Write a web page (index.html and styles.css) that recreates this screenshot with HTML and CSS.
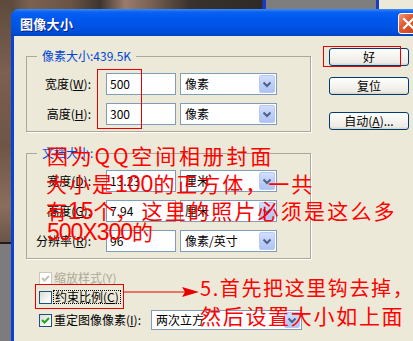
FILE: index.html
```html
<!DOCTYPE html>
<html lang="zh-CN">
<head>
<meta charset="utf-8">
<title>图像大小</title>
<link rel="stylesheet" href="styles.css">
</head>
<body>
<div class="desk">
  <div class="window">
    <div class="titlebar">
      <span class="title">图像大小</span>
      <span class="close"><svg width="13" height="13" viewBox="0 0 13 13"><path d="M2 2 L11 11 M11 2 L2 11" stroke="#fff" stroke-width="2.2" stroke-linecap="square"/></svg></span>
    </div>
    <div class="client">
      <div class="main">
        <fieldset class="group g1">
          <legend>像素大小:439.5K</legend>
          <div class="row">
            <span class="lbl">宽度(<u>W</u>):</span>
            <span class="field">500</span>
            <span class="select"><span class="val">像素</span><span class="drop"><svg width="10" height="7" viewBox="0 0 10 7"><path d="M1.5 1.5 L5 5 L8.5 1.5" fill="none" stroke="#4D6185" stroke-width="2"/></svg></span></span>
          </div>
          <div class="row">
            <span class="lbl">高度(<u>H</u>):</span>
            <span class="field">300</span>
            <span class="select"><span class="val">像素</span><span class="drop"><svg width="10" height="7" viewBox="0 0 10 7"><path d="M1.5 1.5 L5 5 L8.5 1.5" fill="none" stroke="#4D6185" stroke-width="2"/></svg></span></span>
          </div>
        </fieldset>
        <fieldset class="group g2">
          <legend>文档大小:</legend>
          <div class="row">
            <span class="lbl">宽度(<u>D</u>):</span>
            <span class="field">13.23</span>
            <span class="select"><span class="val">厘米</span><span class="drop"><svg width="10" height="7" viewBox="0 0 10 7"><path d="M1.5 1.5 L5 5 L8.5 1.5" fill="none" stroke="#4D6185" stroke-width="2"/></svg></span></span>
          </div>
          <div class="row">
            <span class="lbl">高度(<u>G</u>):</span>
            <span class="field">7.94</span>
            <span class="select"><span class="val">厘米</span><span class="drop"><svg width="10" height="7" viewBox="0 0 10 7"><path d="M1.5 1.5 L5 5 L8.5 1.5" fill="none" stroke="#4D6185" stroke-width="2"/></svg></span></span>
          </div>
          <div class="row">
            <span class="lbl">分辨率(<u>R</u>):</span>
            <span class="field">96</span>
            <span class="select"><span class="val">像素/英寸</span><span class="drop"><svg width="10" height="7" viewBox="0 0 10 7"><path d="M1.5 1.5 L5 5 L8.5 1.5" fill="none" stroke="#4D6185" stroke-width="2"/></svg></span></span>
          </div>
        </fieldset>
        <div class="checks">
          <div class="chk disabled">
            <span class="cb"><svg width="11" height="11" viewBox="0 0 11 11"><path d="M2 5 L4.5 7.5 L9 3" fill="none" stroke="#C4C2B4" stroke-width="2"/></svg></span>
            <span class="ctext">缩放样式(Y)</span>
          </div>
          <div class="chk">
            <span class="cb"></span>
            <span class="ctext focus">约束比例(<u>C</u>)</span>
          </div>
          <div class="chk resample">
            <span class="cb"><svg width="11" height="11" viewBox="0 0 11 11"><path d="M2 5 L4.5 7.5 L9 3" fill="none" stroke="#21A121" stroke-width="2"/></svg></span>
            <span class="ctext wide">重定图像像素(<u>I</u>):</span>
            <span class="select long"><span class="val">两次立方</span><span class="drop"><svg width="10" height="7" viewBox="0 0 10 7"><path d="M1.5 1.5 L5 5 L8.5 1.5" fill="none" stroke="#4D6185" stroke-width="2"/></svg></span></span>
          </div>
        </div>
      </div>
      <div class="buttons">
        <span class="btn ok">好</span>
        <span class="btn reset">复位</span>
        <span class="btn auto">自动(<u>A</u>)...</span>
      </div>
    </div>
  </div>

  <div class="mark mark-ok"></div>
  <div class="mark mark-size"></div>
  <div class="mark mark-constrain"></div>
  <svg class="arrow" width="76" height="14" viewBox="0 0 76 14"><path d="M0 7 H62" stroke="#E80000" stroke-width="1.2"/><path d="M58 2 L75 7 L58 12 L61 7 Z" fill="#E80000"/></svg>

  <div class="note n1">因为QQ空间相册封面</div>
  <div class="note n2">大小是<span class="num">100</span>的正方体，一共</div>
  <div class="note n3">有<span class="num">15</span>个，<span class="gap">这里的照片必须是这么多</span></div>
  <div class="note n4"><span class="num big">500X300</span>的</div>
  <div class="note n5">5.首先把这里钩去掉，</div>
  <div class="note n6">然后设置大小如上面</div>
</div>
</body>
</html>
```
FILE: styles.css
```css
* { box-sizing: border-box; }
html, body { margin: 0; padding: 0; }
body {
  width: 413px;
  height: 341px;
  overflow: hidden;
  font-family: "Noto Sans CJK SC", "DejaVu Sans", sans-serif;
  font-size: 12px;
  color: #000;
}
u { text-decoration: underline; text-underline-offset: 1px; }

.desk {
  position: relative;
  width: 413px;
  height: 341px;
  overflow: hidden;
  padding: 9px 0 0 11px;
  background:
    linear-gradient(#7c7c7c, #7c7c7c) 0 244px / 11px 100px no-repeat,
    linear-gradient(#1e1e1e, #1e1e1e) 0 242px / 11px 2px no-repeat,
    linear-gradient(to bottom, #5d4a3c, #7c6050 30%, #6e5545 60%, #8a6e5c 85%, #6a5546) 0 0 / 11px 242px no-repeat,
    linear-gradient(to right, #4b3d30 0, #7c6150 30px, #6b5444 70px, #3e3530 100px, #9a7c6c 125px, #7a6255 150px, #3a322c 190px, #2e2a26 262px, #1c3bc4 263px, #1c3bc4 266px, #7e7e7e 266px, #7e7e7e 376px, #1c3bc4 376px, #1c3bc4 379px, #ECE9D8 379px) 0 0 / 100% 12px no-repeat,
    #6a5546;
}

.window {
  width: 410px;
  height: 340px;
  background: #0842D8;
  border-top-left-radius: 8px;
  display: flex;
  flex-direction: column;
}
.titlebar {
  height: 27px;
  flex: none;
  display: flex;
  align-items: flex-start;
  border-top-left-radius: 8px;
  background: linear-gradient(to bottom, #3A8CFB 0, #0A62F2 3px, #0058EE 9px, #0053E4 18px, #0049D4 25px, #003FB8 27px);
}
.title {
  margin: 2px 0 0 9px;
  line-height: 25px;
  color: #fff;
  font-weight: bold;
  font-size: 13px;
  letter-spacing: 0.3px;
  text-shadow: 1px 1px 0 #0A1C8A;
}
.close {
  margin: 4px 2px 0 auto;
  width: 21px;
  height: 21px;
  border: 1px solid #fff;
  border-radius: 3px;
  background: linear-gradient(135deg, #F0967A 0, #E2582F 40%, #C8401A 100%);
  display: flex;
  align-items: center;
  justify-content: center;
}

.client {
  flex: 1;
  margin-left: 3px;
  background: #ECE9D8;
  display: flex;
  align-items: flex-start;
  gap: 18px;
  padding: 12px 0 0 12px;
}
.main { width: 285px; flex: none; padding-top: 2px; }

.group {
  margin: 0;
  padding: 0 0 6px 0;
  width: 285px;
  min-width: 0;
  border: 1px solid #ACA899;
  box-shadow: 1px 1px 0 #fff;
}
.group legend {
  margin-left: 10px;
  padding: 0 5px;
  height: 12px;
  line-height: 12px;
  font-size: 12px;
  color: #0046D5;
}
.g2 { margin-top: 15px; }

.row {
  display: flex;
  align-items: center;
  height: 22px;
  margin-top: 8px;
}
.group legend + .row { margin-top: 11px; }
.lbl {
  width: 64px;
  margin-right: 15px;
  text-align: right;
  white-space: nowrap;
  line-height: 14px;
}
.field {
  width: 70px;
  height: 22px;
  border: 1px solid #7F9DB9;
  background: #fff;
  padding-left: 3px;
  line-height: 20px;
}
.select {
  width: 97px;
  height: 22px;
  margin-left: 4px;
  border: 1px solid #7F9DB9;
  background: #fff;
  display: flex;
  align-items: center;
  padding: 1px;
}
.select .val { flex: 1; padding-left: 3px; line-height: 18px; white-space: nowrap; }
.drop {
  width: 16px;
  height: 18px;
  flex: none;
  border: 1px solid #B6C9F7;
  border-radius: 2px;
  background: linear-gradient(to bottom, #D2DEFD, #BACCF8 60%, #AFC3F4);
  display: flex;
  align-items: center;
  justify-content: center;
}

.checks { padding: 10px 0 0 13px; }
.chk { display: flex; align-items: center; height: 18px; }
.chk + .chk { margin-top: 1px; }
.chk.resample { height: 20px; margin-top: 4px; }
.cb {
  width: 13px;
  height: 13px;
  flex: none;
  margin-right: 2px;
  border: 1px solid #1C5180;
  background: linear-gradient(135deg, #DCDCD7, #F4F4F0 60%, #fff);
  display: flex;
  align-items: center;
  justify-content: center;
}
.disabled .cb { border-color: #CAC8BB; background: #fff; }
.disabled .ctext { color: #ACA899; }
.ctext { line-height: 12px; white-space: nowrap; }
.ctext.focus { outline: 1px dotted #000; outline-offset: 0; padding: 0 1px; }
.ctext.wide { width: 97px; }
.select.long { width: 151px; height: 20px; margin-left: 0; }
.select.long .drop { height: 16px; }

.buttons { width: 80px; flex: none; display: flex; flex-direction: column; }
.btn {
  height: 18px;
  border: 1px solid #003C74;
  border-radius: 3px;
  background: linear-gradient(to bottom, #FFFFFF, #F5F4EF 45%, #ECEBE6 85%, #D8D2C6);
  display: flex;
  align-items: center;
  justify-content: center;
  line-height: 14px;
}
.btn.reset { margin-top: 11px; }
.btn.auto { margin-top: 17px; }

.mark { position: absolute; border: 1px solid #E80000; }
.mark-ok { left: 323px; top: 46px; width: 78px; height: 21px; }
.mark-size { left: 97px; top: 69px; width: 45px; height: 60px; }
.mark-constrain { left: 35px; top: 284px; width: 89px; height: 25px; }
.arrow { position: absolute; left: 124px; top: 285px; }

.note {
  position: absolute;
  color: #F00;
  font-family: "Noto Sans CJK SC", sans-serif;
  font-size: 21px;
  line-height: 24px;
  white-space: nowrap;
}
.note .num { font-family: "Liberation Sans", sans-serif; font-size: 23px; letter-spacing: 0; }
.n1 { left: 47px; top: 143px; letter-spacing: 2.8px; }
.n2 { left: 46px; top: 171px; letter-spacing: 2px; }
.n3 { left: 46px; top: 198px; letter-spacing: 1px; }
.n3 .gap { margin-left: 4px; letter-spacing: 2.2px; }
.n4 { left: 47px; top: 219px; }
.n4 .big { letter-spacing: -1px; }
.n5 { left: 200px; top: 276px; font-size: 20px; letter-spacing: 1.6px; }
.n6 { left: 200px; top: 303px; letter-spacing: 1.7px; }
```
